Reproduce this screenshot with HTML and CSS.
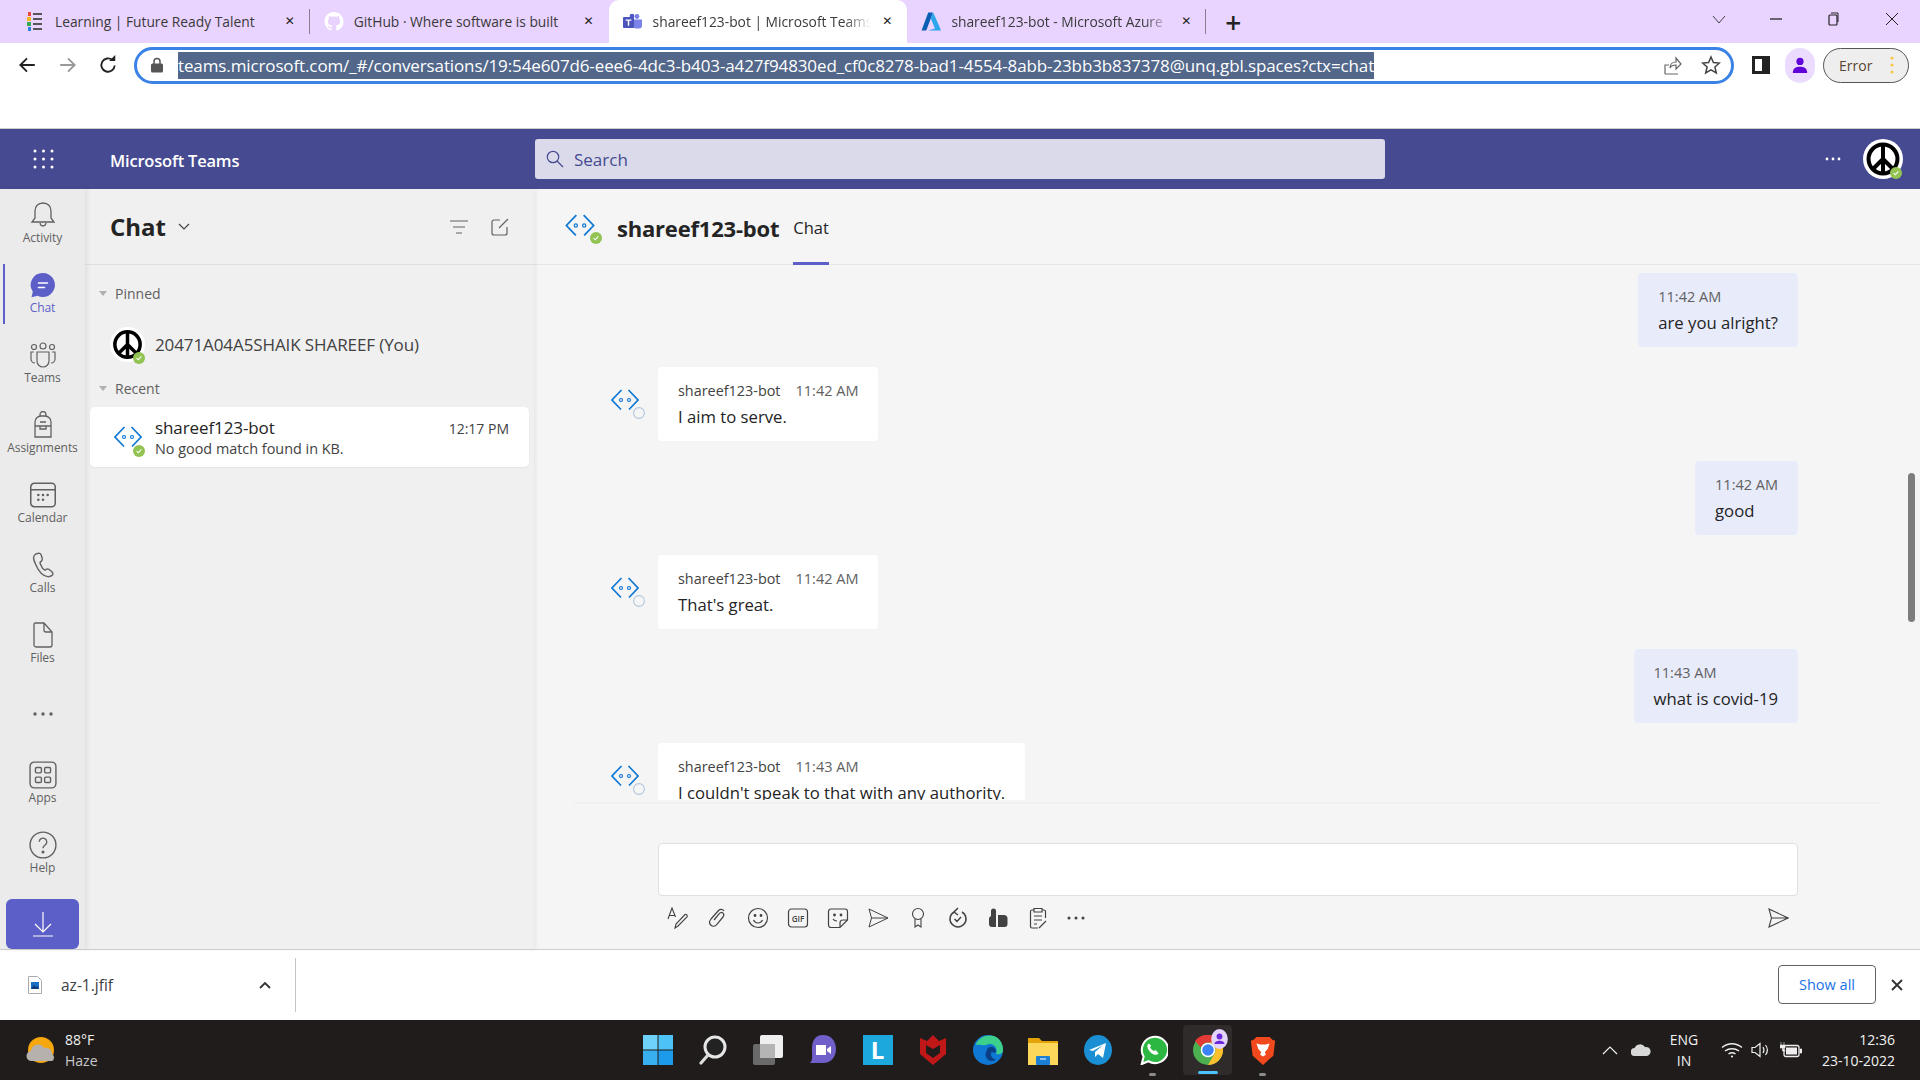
FILE: index.html
```html
<!DOCTYPE html>
<html lang="en">
<head>
    <meta charset="UTF-8">
    <title>shareef123-bot | Microsoft Teams</title>
    <link rel="stylesheet" href="styles.css">
</head>
<body>
    <svg class="defs" width="0" height="0">
        <symbol id="bot" viewBox="0 0 28 22">
            <path d="M10.500 1 1 11l9 9.500M17.500 1 27 11l-9 9.500" fill="none" stroke="#0f78d4" stroke-width="1.700"/>
            <circle cx="10" cy="11" r="1.500" fill="none" stroke="#0f78d4" stroke-width="1.200"/>
            <circle cx="18" cy="11" r="1.500" fill="none" stroke="#0f78d4" stroke-width="1.200"/>
        </symbol>
        <symbol id="peace" viewBox="0 0 36 36">
            <circle cx="18" cy="18" r="18" fill="#fff"/>
            <circle cx="18" cy="18" r="13" fill="none" stroke="#000" stroke-width="3.600"/>
            <path d="M18 5v26M18 18 9 27M18 18l9 9" stroke="#000" stroke-width="3.600" fill="none"/>
        </symbol>
        <symbol id="ok" viewBox="0 0 12 12">
            <circle cx="6" cy="6" r="6" fill="#92c353"/>
            <path d="m3.600 6.200 1.700 1.600 3-3.400" fill="none" stroke="#fff" stroke-width="1.100"/>
        </symbol>
        <symbol id="away" viewBox="0 0 12 12">
            <circle cx="6" cy="6" r="5.400" fill="#f5f5f5" stroke="#b4c6de" stroke-width="1.100"/>
        </symbol>
    </svg>

    <div class="tabstrip">
        <div class="tab tab-sep">
            <svg class="favicon" viewBox="0 0 20 19"><path d="M3 0h3v4H3z" fill="#e8483f"/><path d="M2 5h4v4H2z" fill="#f5b81c"/><path d="M2 10h4v4H2z" fill="#35a853"/><path d="M3 15h3v4H3z" fill="#2a7de1"/><path d="M8 1h9v2H8zM8 6h9v2H8zM8 11h9v2H8zM8 16h9v2H8z" fill="#555"/></svg>
            <span class="tab-title">Learning | Future Ready Talent</span>
            <span class="tab-x">&#10005;</span>
        </div>
        <div class="tab">
            <svg class="favicon" viewBox="0 0 16 16"><path fill="#fff" d="M8 0C3.580 0 0 3.580 0 8c0 3.540 2.290 6.530 5.470 7.590.4.070.55-.17.55-.38 0-.19-.01-.82-.01-1.490-2.010.37-2.530-.49-2.690-.94-.09-.23-.48-.94-.82-1.130-.28-.15-.68-.52-.01-.53.63-.01 1.080.58 1.230.82.72 1.210 1.870.87 2.330.66.07-.52.28-.87.51-1.070-1.780-.2-3.640-.89-3.640-3.950 0-.87.31-1.590.82-2.150-.08-.2-.36-1.020.08-2.120 0 0 .67-.21 2.200.82.64-.18 1.320-.27 2-.27.68 0 1.360.09 2 .27 1.530-1.040 2.200-.82 2.200-.82.44 1.100.16 1.920.08 2.120.51.56.82 1.270.82 2.150 0 3.070-1.870 3.750-3.650 3.950.29.25.54.73.54 1.480 0 1.070-.01 1.930-.01 2.200 0 .21.15.46.55.38A8.013 8.013 0 0016 8c0-4.420-3.580-8-8-8z"/></svg>
            <span class="tab-title">GitHub &middot; Where software is built</span>
            <span class="tab-x">&#10005;</span>
        </div>
        <div class="tab tab-active">
            <svg class="favicon" viewBox="0 0 20 16"><circle cx="14" cy="3" r="2.400" fill="#7b83eb"/><path d="M10 6h9v6a3 3 0 0 1-3 3h-3a3 3 0 0 1-3-3z" fill="#7b83eb"/><circle cx="9" cy="2.600" r="2.400" fill="#5059c9"/><rect y="3.500" width="11" height="11" rx="1" fill="#4b53bc"/><path d="M2.600 6h5.800v1.300H6.200v5H4.800v-5H2.600z" fill="#fff"/></svg>
            <span class="tab-title tab-fade">shareef123-bot | Microsoft Teams</span>
            <span class="tab-x">&#10005;</span>
        </div>
        <div class="tab tab-sep">
            <svg class="favicon" viewBox="0 0 18 16"><path d="M6.500 0h4.300L5 15.500a.7.7 0 0 1-.6.5H.5L6.500 0z" fill="#0a5fb4"/><path d="M11 0l6.800 15.400a.4.4 0 0 1-.4.600H6.500l6-1.800L8.800 5z" fill="#2ea6ee"/></svg>
            <span class="tab-title tab-fade">shareef123-bot - Microsoft Azure</span>
            <span class="tab-x">&#10005;</span>
        </div>
        <span class="tab-plus">+</span>
        <div class="win-controls">
            <svg viewBox="0 0 14 14"><path d="M1 4l6 7 6-7" fill="none" stroke="#444"/></svg>
            <svg viewBox="0 0 14 14"><path d="M1 7h12" stroke="#222" stroke-width="1.300"/></svg>
            <svg viewBox="0 0 14 14"><rect x="3" y="3" width="8" height="10" rx="1" fill="none" stroke="#222" stroke-width="1.200"/><path d="M5 1h7v9" fill="none" stroke="#222"/></svg>
            <svg class="win-close" viewBox="0 0 14 14"><path d="M1 1l12 12M13 1 1 13" stroke="#222"/></svg>
        </div>
    </div>

    <div class="toolbar">
        <svg class="nav-icon" viewBox="0 0 18 18"><path d="M16 9H3M9 3 3 9l6 6" fill="none" stroke="#222" stroke-width="1.700"/></svg>
        <svg class="nav-icon nav-forward" viewBox="0 0 18 18"><path d="M2 9h13M9 3l6 6-6 6" fill="none" stroke="#999" stroke-width="1.700"/></svg>
        <svg class="nav-icon nav-reload" viewBox="0 0 18 18"><path d="M15 9.500A6 6 0 1 1 13 4.600" fill="none" stroke="#222" stroke-width="1.700"/><path d="M10 5.500h5.500V0z" fill="#222"/></svg>
        <div class="omnibox">
            <svg class="lock" viewBox="0 0 12 16"><path d="M3 7V4.500a3 3 0 0 1 6 0V7" fill="none" stroke="#555" stroke-width="1.500"/><rect y="6.500" width="12" height="9" rx="1.500" fill="#555"/></svg>
            <span class="url">teams.microsoft.com/_#/conversations/19:54e607d6-eee6-4dc3-b403-a427f94830ed_cf0c8278-bad1-4554-8abb-23bb3b837378@unq.gbl.spaces?ctx=chat</span>
            <svg class="omni-icon omni-share" viewBox="0 0 20 20"><path d="M3 19h13M3 19v-9h4M8 13c0-4 3-6 6-6V3l5 6-5 5v-4c-3 0-5 1-6 3z" fill="none" stroke="#666" stroke-width="1.200"/></svg>
            <svg class="omni-icon" viewBox="0 0 20 20"><path d="m10 2 2.400 5.500 6 .5-4.500 4 1.400 6L10 14.800 4.700 18l1.400-6L1.600 8l6-.5z" fill="none" stroke="#444" stroke-width="1.500"/></svg>
        </div>
        <svg class="sidepanel" viewBox="0 0 18 18"><path d="M0 0h18v18H0z" fill="#222"/><path d="M3 3h7v12H3z" fill="#fff"/></svg>
        <div class="profile">
            <svg viewBox="0 0 20 20"><circle cx="10" cy="6" r="4" fill="#6200d9"/><path d="M2 19c0-5 3-7 8-7s8 2 8 7z" fill="#6200d9"/></svg>
        </div>
        <div class="error-pill">
            <span>Error</span>
            <svg viewBox="0 0 4 18"><circle cx="2" cy="2" r="1.600" fill="#f7c948"/><circle cx="2" cy="9" r="1.600" fill="#f7c948"/><circle cx="2" cy="16" r="1.600" fill="#f7c948"/></svg>
        </div>
    </div>
    <div class="bookmarks"></div>

    <header class="teams-bar">
        <svg class="waffle" viewBox="0 0 21 20" fill="#fff">
            <circle cx="2" cy="2" r="1.500"/><circle cx="10.500" cy="2" r="1.500"/><circle cx="19" cy="2" r="1.500"/>
            <circle cx="2" cy="10" r="1.500"/><circle cx="10.500" cy="10" r="1.500"/><circle cx="19" cy="10" r="1.500"/>
            <circle cx="2" cy="18" r="1.500"/><circle cx="10.500" cy="18" r="1.500"/><circle cx="19" cy="18" r="1.500"/>
        </svg>
        <span class="app-name">Microsoft Teams</span>
        <div class="search">
            <svg viewBox="0 0 18 18"><circle cx="7" cy="7" r="5.700" fill="none" stroke="#464a91" stroke-width="1.200"/><path d="m11 11 6 6" stroke="#464a91" stroke-width="1.200"/></svg>
            <span>Search</span>
        </div>
        <svg class="bar-more" viewBox="0 0 16 4" fill="#fff"><circle cx="2" cy="2" r="1.400"/><circle cx="8" cy="2" r="1.400"/><circle cx="14" cy="2" r="1.400"/></svg>
        <div class="avatar avatar-me">
            <svg class="avatar-img"><use href="#peace"/></svg>
            <svg class="status status-bar"><use href="#ok"/></svg>
        </div>
    </header>

    <div class="teams-body">
        <nav class="rail">
            <div class="rail-item">
                <svg viewBox="0 0 24 28"><path d="M12 2c-5 0-8 3.500-8 8v7l-3 4h22l-3-4v-7c0-4.500-3-8-8-8zM9 22c.3 2 1.500 3 3 3s2.700-1 3-3" fill="none" stroke="#616161" stroke-width="1.300"/></svg>
                <span>Activity</span>
            </div>
            <div class="rail-item rail-active">
                <svg viewBox="0 0 28 28"><path d="M14 2a12 12 0 1 1-5.500 22.700L2.500 26.300l1.300-5.500A12 12 0 0 1 14 2z" fill="#5b5fc7"/><path d="M9.500 12h9M9.500 16.500h6" stroke="#fff" stroke-width="1.600" stroke-linecap="round"/></svg>
                <span>Chat</span>
            </div>
            <div class="rail-item">
                <svg viewBox="0 0 28 28" fill="none" stroke="#616161" stroke-width="1.200"><circle cx="14" cy="5" r="3"/><circle cx="5" cy="6" r="2.500"/><circle cx="23" cy="6" r="2.500"/><path d="M8 11h12v9a6 6 0 0 1-12 0zM5 11H2v7a4 4 0 0 0 4 4M23 11h3v7a4 4 0 0 1-4 4"/></svg>
                <span>Teams</span>
            </div>
            <div class="rail-item">
                <svg viewBox="0 0 24 28" fill="none" stroke="#616161" stroke-width="1.300"><path d="M9 5V3.500a3 3 0 0 1 6 0V5M4 26V11a6 6 0 0 1 6-6h4a6 6 0 0 1 6 6v15zM4 15h16M9 11h6M9 15v3h6v-3"/></svg>
                <span>Assignments</span>
            </div>
            <div class="rail-item">
                <svg viewBox="0 0 24 24" fill="none" stroke="#616161" stroke-width="1.300"><rect x="1.500" y="2" width="21" height="20" rx="3"/><path d="M1.500 7.500h21"/><g fill="#616161" stroke="none"><circle cx="8" cy="12" r="1.100"/><circle cx="12" cy="12" r="1.100"/><circle cx="16" cy="12" r="1.100"/><circle cx="8" cy="16" r="1.100"/><circle cx="12" cy="16" r="1.100"/></g></svg>
                <span>Calendar</span>
            </div>
            <div class="rail-item">
                <svg viewBox="0 0 24 26"><path d="M8 2 5 3C2.500 4.500 3 8 5 12c2.500 6 7 11.500 12 12l3-1c1.500-1 1.500-2.500.5-3.500l-3-2.500c-1-.7-2-.5-3 .5-1 .5-2 0-3-1.500L9.500 12c-.5-1 0-2 1-2.500 1-1 1-2 .7-3l-1-3C9.800 2.500 9 2 8 2z" fill="none" stroke="#616161" stroke-width="1.300"/></svg>
                <span>Calls</span>
            </div>
            <div class="rail-item">
                <svg viewBox="0 0 22 28" fill="none" stroke="#616161" stroke-width="1.300"><path d="M3 2h9l8 9v13a2 2 0 0 1-2 2H4a2 2 0 0 1-2-2V3zM12 2v7a2 2 0 0 0 2 2h6"/></svg>
                <span>Files</span>
            </div>
            <div class="rail-item rail-dots">
                <svg viewBox="0 0 20 4" fill="#616161"><circle cx="2" cy="2" r="1.700"/><circle cx="10" cy="2" r="1.700"/><circle cx="18" cy="2" r="1.700"/></svg>
            </div>
            <div class="rail-item">
                <svg viewBox="0 0 26 26" fill="none" stroke="#616161" stroke-width="1.300"><rect x="1" y="1" width="24" height="24" rx="4"/><rect x="6" y="6" width="5.500" height="5" rx="1"/><rect x="14.500" y="6" width="5.500" height="5" rx="1"/><rect x="6" y="15" width="5.500" height="5" rx="1"/><rect x="14.500" y="15" width="5.500" height="5" rx="1"/></svg>
                <span>Apps</span>
            </div>
            <div class="rail-item">
                <svg viewBox="0 0 26 26" fill="none" stroke="#616161" stroke-width="1.300"><circle cx="13" cy="13" r="12"/><path d="M9.500 10a3.500 3.500 0 1 1 5.500 3c-1.500 1-2 1.500-2 3"/><circle cx="13" cy="19.500" r=".8" fill="#616161"/></svg>
                <span>Help</span>
            </div>
            <button class="rail-download">
                <svg viewBox="0 0 20 26"><path d="M10 1v20M2 13l8 8 8-8M0 25h20" fill="none" stroke="#fff" stroke-width="1.200"/></svg>
            </button>
        </nav>

        <aside class="list-panel">
            <div class="list-head">
                <h1>Chat</h1>
                <svg class="head-caret" viewBox="0 0 12 8"><path d="m1 1 5 5 5-5" fill="none" stroke="#424242" stroke-width="1.200"/></svg>
                <svg class="head-icon head-filter" viewBox="0 0 18 14"><path d="M0 1h18M3 7h12M6 13h6" stroke="#616161" stroke-width="1.200"/></svg>
                <svg class="head-icon" viewBox="0 0 18 18"><path d="M9 2H3a2 2 0 0 0-2 2v11a2 2 0 0 0 2 2h11a2 2 0 0 0 2-2V9M8 10l9-9" fill="none" stroke="#616161" stroke-width="1.200"/></svg>
            </div>
            <div class="section-label section-pinned"><i class="tri"></i>Pinned</div>
            <div class="chat-row chat-pinned">
                <div class="avatar avatar-list">
                    <svg class="avatar-img"><use href="#peace"/></svg>
                    <svg class="status status-list"><use href="#ok"/></svg>
                </div>
                <span class="chat-name">20471A04A5SHAIK SHAREEF (You)</span>
            </div>
            <div class="section-label"><i class="tri"></i>Recent</div>
            <div class="chat-row chat-card">
                <div class="avatar avatar-list">
                    <svg class="bot-img"><use href="#bot"/></svg>
                    <svg class="status status-list"><use href="#ok"/></svg>
                </div>
                <div class="chat-text">
                    <div class="chat-top">
                        <span class="chat-name">shareef123-bot</span>
                        <span class="chat-time">12:17 PM</span>
                    </div>
                    <div class="chat-preview">No good match found in KB.</div>
                </div>
            </div>
        </aside>

        <main class="conversation">
            <div class="conv-head">
                <div class="avatar avatar-conv">
                    <svg class="bot-img"><use href="#bot"/></svg>
                    <svg class="status status-conv"><use href="#ok"/></svg>
                </div>
                <h2>shareef123-bot</h2>
                <span class="conv-tab">Chat</span>
            </div>
            <div class="messages">
                <div class="msg msg-me"><div class="bubble"><div class="meta"><time>11:42 AM</time></div><div class="body">are you alright?</div></div></div>
                <div class="msg">
                    <div class="avatar avatar-msg"><svg class="bot-img"><use href="#bot"/></svg><svg class="status status-msg"><use href="#away"/></svg></div>
                    <div class="bubble"><div class="meta"><b>shareef123-bot</b><time>11:42 AM</time></div><div class="body">I aim to serve.</div></div>
                </div>
                <div class="msg msg-me"><div class="bubble"><div class="meta"><time>11:42 AM</time></div><div class="body">good</div></div></div>
                <div class="msg">
                    <div class="avatar avatar-msg"><svg class="bot-img"><use href="#bot"/></svg><svg class="status status-msg"><use href="#away"/></svg></div>
                    <div class="bubble"><div class="meta"><b>shareef123-bot</b><time>11:42 AM</time></div><div class="body">That's great.</div></div>
                </div>
                <div class="msg msg-me"><div class="bubble"><div class="meta"><time>11:43 AM</time></div><div class="body">what is covid-19</div></div></div>
                <div class="msg">
                    <div class="avatar avatar-msg"><svg class="bot-img"><use href="#bot"/></svg><svg class="status status-msg"><use href="#away"/></svg></div>
                    <div class="bubble"><div class="meta"><b>shareef123-bot</b><time>11:43 AM</time></div><div class="body">I couldn't speak to that with any authority.</div></div>
                </div>
            </div>
            <div class="scrollthumb"></div>
            <div class="composer">
                <div class="compose-box"></div>
                <div class="compose-tools">
                    <svg viewBox="0 0 22 22" fill="none" stroke="#424242" stroke-width="1.100"><path d="M1 12 5 1l3.500 9M2.300 8.500h5M8 21l1-4L18 7.500c1-1 3 1 2 2.500l-9 9z"/></svg>
                    <svg viewBox="0 0 22 22" fill="none" stroke="#424242" stroke-width="1.200"><path d="M17 4c-1.500-2-4-2-5.500-.5L4 12c-2 2.500-1.500 5 0 6.300s4 1.200 5.500-.5L16 10c1-1.300 1-2.800 0-3.800s-2.500-1-3.500.2L7 13"/></svg>
                    <svg viewBox="0 0 22 22" fill="none" stroke="#424242" stroke-width="1.200"><circle cx="11" cy="11" r="9.500"/><path d="M6.500 13c1 2 2.500 3 4.500 3s3.500-1 4.500-3"/><circle cx="8" cy="8.500" r=".8" fill="#424242"/><circle cx="14" cy="8.500" r=".8" fill="#424242"/></svg>
                    <svg viewBox="0 0 22 22" fill="none" stroke="#424242" stroke-width="1.200"><rect x="1.500" y="2" width="19" height="18" rx="3"/><text x="11" y="14.500" text-anchor="middle" class="gif-label">GIF</text></svg>
                    <svg viewBox="0 0 22 22" fill="none" stroke="#424242" stroke-width="1.200"><path d="M4 2h14a2.500 2.500 0 0 1 2.500 2.500V13L13 20.500H4A2.500 2.500 0 0 1 1.500 18V4.500A2.500 2.500 0 0 1 4 2zM13 20.500V16a3 3 0 0 1 3-3h4.500M6 12c1 1.500 2.500 2 4 2"/><circle cx="7.500" cy="8" r=".8" fill="#424242"/><circle cx="14" cy="8" r=".8" fill="#424242"/></svg>
                    <svg viewBox="0 0 22 22" fill="none" stroke="#424242" stroke-width="1"><path d="M2 2l19 9-19 9 2.500-9zM4.500 11H21"/></svg>
                    <svg viewBox="0 0 22 22" fill="none" stroke="#424242" stroke-width="1.100"><circle cx="11" cy="7" r="5.500"/><path d="M8 12v8l3-2 3 2v-8"/></svg>
                    <svg viewBox="0 0 22 22" fill="none" stroke="#424242" stroke-width="1.500"><path d="M7 5a8 8 0 1 0 8 0M11 1l-4 4 4 3M7.500 12l2.500 2.500 4-4.500"/></svg>
                    <svg viewBox="0 0 22 22" fill="#424242"><path d="M4 4a2.500 2.500 0 0 1 5 0v16H5a3 3 0 0 1-3-3v-5c0-2 1-2.500 2-3zM11 8h6a3.500 3.500 0 0 1 3.500 3.500V17a3 3 0 0 1-3 3H11z"/></svg>
                    <svg viewBox="0 0 22 22" fill="none" stroke="#424242" stroke-width="1.200"><path d="M7 3H5a1.500 1.500 0 0 0-1.500 1.500v15A1.500 1.500 0 0 0 5 21h6M15 3h2a1.500 1.500 0 0 1 1.500 1.500V11M7 1.500h8v3.500H7zM7 9h8M7 13h8M7 17h3M12 21l7-7" /></svg>
                    <svg class="tool-dots" viewBox="0 0 18 4" fill="#424242"><circle cx="2" cy="2" r="1.500"/><circle cx="9" cy="2" r="1.500"/><circle cx="16" cy="2" r="1.500"/></svg>
                    <svg class="tool-send" viewBox="0 0 22 22" fill="none" stroke="#424242" stroke-width="1.100"><path d="M2 2l19 9-19 9 2.500-9zM4.500 11H21"/></svg>
                </div>
            </div>
        </main>
    </div>

    <div class="shelf">
        <div class="shelf-item">
            <svg class="shelf-file" viewBox="0 0 14 18"><path d="M.5.5h9l4 4v13H.5z" fill="#fff" stroke="#aaa"/><rect x="3" y="6" width="8" height="7" fill="#1a6fc4"/><path d="M3 13l3-4 2 2 1-1 2 3z" fill="#0b3e78"/></svg>
            <span class="shelf-name">az-1.jfif</span>
            <svg class="shelf-caret" viewBox="0 0 12 8"><path d="M1 7l5-5 5 5" fill="none" stroke="#333" stroke-width="1.800"/></svg>
        </div>
        <button class="show-all">Show all</button>
        <svg class="shelf-close" viewBox="0 0 12 12"><path d="M1 1l10 10M11 1 1 11" stroke="#333" stroke-width="1.900"/></svg>
    </div>

    <footer class="taskbar">
        <div class="weather">
            <svg viewBox="0 0 30 26"><circle cx="15" cy="13" r="13" fill="#f5a70d"/><path d="M6 24a5 5 0 0 1-1-10 7 7 0 0 1 13-3 6 6 0 0 1 8 6 4 4 0 0 1 0 7z" fill="#b6b1ad"/></svg>
            <div class="weather-text"><div>88&deg;F</div><div class="weather-sub">Haze</div></div>
        </div>
        <div class="task-icons">
            <span class="task-slot"><svg viewBox="0 0 30 30"><path d="M0 0h14.500v14.500H0z" fill="#6fd2fa"/><path d="M15.500 0H30v14.500H15.500z" fill="#4cc2f7"/><path d="M0 15.500h14.500V30H0z" fill="#38b0f0"/><path d="M15.500 15.500H30V30H15.500z" fill="#1c9bec"/></svg></span>
            <span class="task-slot"><svg viewBox="0 0 30 30"><circle cx="17" cy="12" r="10" fill="#222" stroke="#e6e6e6" stroke-width="3"/><path d="M10 20 3 28" stroke="#ddd" stroke-width="3.200" stroke-linecap="round"/></svg></span>
            <span class="task-slot"><svg viewBox="0 0 30 30"><rect y="9" width="22" height="21" rx="2" fill="#6a6a6a"/><rect x="7" y="0" width="23" height="23" rx="2" fill="#efefef"/><rect x="7" y="9" width="15" height="14" fill="#b5b5b5"/></svg></span>
            <span class="task-slot"><svg viewBox="0 0 30 30"><path d="M15 0c8 0 13 6 13 14s-5 14-13 14H2c3-3 2-6 2-14S7 0 15 0z" fill="#7160c9"/><path d="M8 10h10v10H8zM19 14l4-3v8l-4-3z" fill="#fff"/></svg></span>
            <span class="task-slot"><span class="task-l">L</span></span>
            <span class="task-slot"><svg viewBox="0 0 30 30"><path d="M2 3l7 3 6-6 6 6 7-3v16L15 30 2 19z" fill="#c01818"/><path d="M8 10l7 4 7-4v8l-7 5-7-5z" fill="#201c1b"/></svg></span>
            <span class="task-slot"><svg viewBox="0 0 30 30"><circle cx="15" cy="15" r="15" fill="#0f78d4"/><path d="M3 9C6 2 14-1 21 1c6 2 9 8 9 14 0 4-4 5-7 4 3-8-5-12-10-9-3 1-6-1-10 0z" fill="#3dd08c"/><path d="M14 15c0-4 8-5 9 1 0 2-2 2-4 1-2 0-2 6 4 8-8 4-13-4-9-10z" fill="#0b3f85"/></svg></span>
            <span class="task-slot"><svg viewBox="0 0 30 30"><path d="M0 3h11l3 3h16v24H0z" fill="#e4a409"/><path d="M0 8h30v22H0z" fill="#fdd75a"/><rect x="8" y="21" width="14" height="9" rx="1" fill="#1b7fd4"/><path d="M12 24h6" stroke="#fff"/></svg></span>
            <span class="task-slot"><svg viewBox="0 0 30 30"><ellipse cx="15" cy="15" rx="14" ry="15" fill="#1a8fd3"/><path d="M6 15 23 8l-3 15-5-4-3 3v-5l8-7-10 6z" fill="#fff"/></svg></span>
            <span class="task-slot task-run"><svg viewBox="0 0 30 32"><path d="M3 31l2-8a14 14 0 1 1 5 5z" fill="#2bb741" stroke="#fff" stroke-width="2.200"/><path d="M10 9c-2 3-1 6 2 9s6 4 9 2l-3-4-2 1c-2-1-3-2-4-4l1-2z" fill="#fff"/></svg></span>
            <span class="task-slot task-active">
                <svg class="chrome-icon" viewBox="0 0 30 30"><circle cx="15" cy="15" r="15" fill="#4caf50"/><path d="M15 0a15 15 0 0 1 13 7.500H15a7.500 7.500 0 0 0-7 5L2 6a15 15 0 0 1 13-6z" fill="#e53935"/><path d="M28 7.500A15 15 0 0 1 15 30l6.500-11.300A7.500 7.500 0 0 0 15 7.500z" fill="#fbc02d"/><circle cx="15" cy="15" r="6.500" fill="#3b82f6" stroke="#fff" stroke-width="1.500"/></svg>
                <svg class="chrome-badge" viewBox="0 0 20 24"><ellipse cx="10" cy="12" rx="10" ry="12" fill="#e4d4fa"/><circle cx="10" cy="9" r="3.500" fill="#6d28d9"/><path d="M4 18c0-3 3-4 6-4s6 1 6 4z" fill="#6d28d9"/></svg>
            </span>
            <span class="task-slot task-run"><svg viewBox="0 0 26 32"><path d="M6 2h14l3 3 3 1-2 16-11 10L2 22 0 6l3-1z" fill="#f1491d"/><path d="M6 9l4 1h6l4-1-2 6-3 3 1 3-3 2-3-2 1-3-3-3z" fill="#fff"/></svg></span>
        </div>
        <div class="tray">
            <svg class="tray-caret" viewBox="0 0 16 9"><path d="M1 8l7-7 7 7" fill="none" stroke="#eee" stroke-width="1.200"/></svg>
            <svg class="tray-cloud" viewBox="0 0 20 12"><path d="M4 12a4 4 0 0 1-.5-8A6 6 0 0 1 14 3a4.500 4.500 0 0 1 2 9z" fill="#d8d8d8"/></svg>
            <div class="tray-lang"><div>ENG</div><div>IN</div></div>
            <svg class="tray-wifi" viewBox="0 0 22 16" fill="none" stroke="#eee" stroke-width="1.400"><path d="M1 5.500c6-5 14-5 20 0M4 9c4-3 10-3 14 0M7.500 12c2-1.500 5-1.500 7 0"/><circle cx="11" cy="14.500" r="1.100" fill="#eee" stroke="none"/></svg>
            <svg class="tray-sound" viewBox="0 0 20 16" fill="none" stroke="#eee" stroke-width="1.200"><path d="M1 5.500h3L9 1.500v13l-5-4H1zM12 5c1.300 2 1.300 4 0 6M14.500 3c2.300 3 2.300 7 0 10"/></svg>
            <svg class="tray-batt" viewBox="0 0 22 16"><rect x="4" y="3.500" width="15" height="11" rx="2" fill="none" stroke="#eee" stroke-width="1.300"/><rect x="6" y="5.500" width="11" height="7" fill="#eee"/><path d="M20 7h2v4h-2zM1 0v3M4 0v3M0 3h5v3H0zM2.500 6v3h3" fill="#eee" stroke="#eee" stroke-width=".6"/></svg>
            <div class="tray-clock"><div>12:36</div><div>23-10-2022</div></div>
        </div>
    </footer>
</body>
</html>
```

FILE: styles.css
```css
* {
    box-sizing: border-box;
}
html, body {
    margin: 0;
    height: 100%;
}
body {
    width: 1920px;
    height: 1080px;
    overflow: hidden;
    display: flex;
    flex-direction: column;
    font-family: "Open Sans", "Noto Sans", sans-serif;
    color: #242424;
    background: #fff;
}
svg {
    display: block;
    flex: none;
}
.defs {
    position: absolute;
}

/* browser tabs */
.tabstrip {
    height: 43px;
    flex: none;
    display: flex;
    align-items: stretch;
    padding-left: 11px;
    background: #e9d3ff;
}
.tab {
    width: 298.800px;
    display: flex;
    align-items: center;
    gap: 10px;
    padding: 0 14px 1px 14px;
    font-size: 13.800px;
    color: #3a3a3a;
    position: relative;
}
.tab-sep::after {
    content: "";
    position: absolute;
    right: 0;
    top: 9px;
    bottom: 9px;
    width: 1px;
    background: #8a7f94;
}
.tab-active {
    background: #fff;
    border-radius: 10px 10px 0 0;
}
.favicon {
    width: 20px;
    height: 19px;
}
.tab-title {
    flex: 1;
    white-space: nowrap;
    overflow: hidden;
}
.tab-fade {
    -webkit-mask-image: linear-gradient(to right, #000 88%, transparent 100%);
    mask-image: linear-gradient(to right, #000 88%, transparent 100%);
}
.tab-x {
    width: 12px;
    font-size: 12px;
    font-weight: 700;
    font-family: "DejaVu Sans", sans-serif;
    color: #222;
    text-align: center;
}
.tab-plus {
    align-self: center;
    margin-left: 19px;
    font-size: 28px;
    font-weight: 600;
    line-height: 26px;
    color: #222;
}
.win-controls {
    margin-left: auto;
    display: flex;
    align-items: center;
    gap: 43px;
    padding: 0 21px 6px 0;
}
.win-controls svg {
    width: 14px;
    height: 14px;
}
.win-controls .win-close {
    margin-left: 2px;
}

/* address bar */
.toolbar {
    height: 44px;
    flex: none;
    display: flex;
    align-items: center;
    padding-left: 17px;
    background: #fff;
}
.nav-icon {
    width: 20px;
    height: 20px;
    margin-right: 22px;
}
.nav-forward {
    margin-left: -1px;
}
.nav-reload {
    margin-right: 17px;
    margin-left: -2px;
}
.omnibox {
    width: 1600px;
    height: 37px;
    display: flex;
    align-items: center;
    padding: 0 10px 0 14px;
    border: 3px solid #3b82e6;
    border-radius: 19px;
    margin-left: -1px;
}
.lock {
    width: 12px;
    height: 16px;
    margin-right: 15px;
}
.url {
    height: 27px;
    line-height: 27px;
    background: #52678a;
    color: #fff;
    font-size: 17px;
    letter-spacing: -.12px;
    white-space: nowrap;
}
.omni-icon {
    width: 20px;
    height: 20px;
}
.omni-share {
    margin-left: auto;
    margin-right: 19px;
}
.sidepanel {
    width: 18px;
    height: 18px;
    margin-left: 18px;
}
.profile {
    width: 30px;
    height: 35px;
    margin-left: 15px;
    border-radius: 15px;
    background: #ebdcff;
    display: flex;
    align-items: center;
    justify-content: center;
}
.profile svg {
    width: 18px;
    height: 20px;
}
.error-pill {
    width: 86px;
    height: 35px;
    margin-left: 8px;
    display: flex;
    align-items: center;
    justify-content: space-between;
    padding: 0 14px 0 15px;
    border: 1px solid #555;
    border-radius: 18px;
    background: #eee;
    font-size: 14px;
    color: #5a4630;
}
.error-pill svg {
    width: 4px;
    height: 18px;
}
.bookmarks {
    height: 42px;
    flex: none;
    background: #fff;
    border-bottom: 1px solid #ccc;
}

/* teams top bar */
.teams-bar {
    height: 60px;
    flex: none;
    display: flex;
    align-items: center;
    background: #464a91;
}
.waffle {
    width: 21px;
    height: 20px;
    margin: 0 56px 0 33px;
}
.app-name {
    width: 425px;
    padding-top: 2px;
    color: #fff;
    font-size: 16.500px;
    font-weight: 600;
    letter-spacing: -.2px;
}
.search {
    width: 850px;
    height: 40px;
    display: flex;
    align-items: center;
    gap: 10px;
    padding-left: 11px;
    border-radius: 3px;
    background: #dadaea;
    color: #464a91;
    font-size: 17px;
}
.search svg {
    width: 18px;
    height: 18px;
}
.bar-more {
    width: 16px;
    height: 4px;
    margin-left: 440px;
}
.avatar {
    position: relative;
    flex: none;
}
.avatar-me {
    width: 40px;
    height: 40px;
    margin-left: 22px;
}
.avatar-img {
    width: 100%;
    height: 100%;
}
.status {
    position: absolute;
    width: 12px;
    height: 12px;
}
.status-bar {
    right: 1px;
    bottom: 0;
}

.teams-body {
    height: 760px;
    flex: none;
    display: flex;
    background: #f5f5f5;
}

/* left rail */
.rail {
    width: 85px;
    flex: none;
    display: flex;
    flex-direction: column;
    gap: 10px;
    padding-top: 5px;
    background: #ebebeb;
    box-shadow: 2px 0 5px rgba(0, 0, 0, .08);
    z-index: 2;
}
.rail-item {
    height: 60px;
    flex: none;
    display: flex;
    flex-direction: column;
    align-items: center;
    padding-top: 7px;
    position: relative;
    font-size: 12px;
    line-height: 16px;
    letter-spacing: -.05px;
    color: #616161;
}
.rail-item svg {
    height: 28px;
    width: 28px;
    margin-bottom: 1px;
}
.rail-active {
    color: #5b5fc7;
}
.rail-active::before {
    content: "";
    position: absolute;
    left: 3px;
    top: 0;
    bottom: 0;
    width: 2px;
    background: #5b5fc7;
}
.rail-dots {
    justify-content: center;
    padding-top: 0;
}
.rail-dots svg {
    height: 4px;
    width: 20px;
    margin: 0;
}
.rail-download {
    width: 73px;
    height: 50px;
    flex: none;
    margin: 5px 0 0 6px;
    padding: 0;
    border: 0;
    border-radius: 6px;
    background: #5b5fc7;
    display: flex;
    align-items: center;
    justify-content: center;
}
.rail-download svg {
    width: 20px;
    height: 26px;
}

/* chat list */
.list-panel {
    width: 449px;
    flex: none;
    background: #f0f0f0;
    box-shadow: 2px 0 4px rgba(0, 0, 0, .06);
    z-index: 1;
}
.list-head {
    height: 76px;
    display: flex;
    align-items: center;
    padding: 0 25px 0 25px;
    border-bottom: 1px solid #e0e0e0;
}
.list-head h1 {
    margin: 0;
    font-size: 24px;
    font-weight: 700;
}
.head-caret {
    width: 12px;
    height: 8px;
    margin-left: 12px;
}
.head-icon {
    width: 18px;
    height: 18px;
}
.head-filter {
    margin-left: auto;
    margin-right: 23px;
}
.section-label {
    display: flex;
    align-items: center;
    height: 20px;
    padding-left: 14px;
    font-size: 14px;
    color: #616161;
}
.section-pinned {
    margin-top: 18px;
}
.tri {
    width: 0;
    height: 0;
    margin-right: 8px;
    border-left: 4px solid transparent;
    border-right: 4px solid transparent;
    border-top: 5px solid #b0b0b0;
}
.chat-row {
    display: flex;
    align-items: center;
    margin: 0 5px;
    padding-left: 20px;
}
.chat-pinned {
    height: 64px;
    margin-top: 9px;
    margin-bottom: 2px;
}
.avatar-list {
    width: 35px;
    height: 35px;
    display: flex;
    align-items: center;
    justify-content: center;
    margin-right: 10px;
}
.status-list {
    right: 0;
    bottom: -2px;
}
.bot-img {
    width: 28px;
    height: 22px;
}
.chat-name {
    font-size: 17px;
    color: #424242;
    letter-spacing: -.1px;
}
.chat-card {
    height: 60px;
    margin-top: 9px;
    background: #fff;
    border-radius: 5px;
    box-shadow: 0 1px 2px rgba(0, 0, 0, .05);
}
.chat-text {
    flex: 1;
    padding: 2px 20px 0 0;
}
.chat-top {
    display: flex;
    justify-content: space-between;
    align-items: baseline;
    line-height: 20px;
}
.chat-card .chat-name {
    color: #242424;
}
.chat-time {
    font-size: 14px;
    color: #424242;
}
.chat-preview {
    font-size: 14.400px;
    line-height: 19px;
    color: #424242;
}

/* conversation */
.conversation {
    flex: 1;
    min-width: 0;
    display: flex;
    flex-direction: column;
    position: relative;
}
.conv-head {
    height: 76px;
    flex: none;
    display: flex;
    align-items: center;
    padding: 2px 0 0 31px;
    border-bottom: 1px solid #e6e6e6;
}
.avatar-conv {
    width: 30px;
    height: 23px;
    margin-top: -4px;
    margin-right: 22px;
}
.avatar-conv .bot-img {
    width: 30px;
    height: 23px;
}
.status-conv {
    right: -7px;
    bottom: -7px;
}
.conv-head h2 {
    margin: 0;
    font-size: 22px;
    font-weight: 700;
    letter-spacing: -.2px;
}
.conv-tab {
    align-self: stretch;
    display: flex;
    align-items: center;
    margin: 0 0 -1px 14px;
    padding-top: 2px;
    font-size: 16.500px;
    border-bottom: 3px solid #5b5fc7;
}
.messages {
    height: 535px;
    flex: none;
    overflow: hidden;
    display: flex;
    flex-direction: column;
    gap: 20px;
    padding: 8px 122px 0 76px;
}
.msg {
    display: flex;
    flex: none;
}
.msg-me {
    justify-content: flex-end;
}
.avatar-msg {
    width: 48px;
    padding: 22px 0 0 1px;
}
.status-msg {
    left: 23px;
    top: 40px;
}
.bubble {
    min-height: 74px;
    padding: 14px 20px 0;
    border-radius: 4px;
    background: #fff;
}
.msg-me .bubble {
    background: #e8ebfa;
}
.meta {
    display: flex;
    gap: 15px;
    line-height: 20px;
    font-size: 14.500px;
}
.meta b {
    font-size: 14.400px;
    font-weight: 500;
    color: #424242;
}
.meta time {
    color: #616161;
}
.body {
    margin-top: 5px;
    font-size: 16.700px;
    line-height: 22px;
    white-space: nowrap;
}
.scrollthumb {
    position: absolute;
    right: 5px;
    top: 284px;
    width: 7px;
    height: 149px;
    border-radius: 4px;
    background: #7d7d7d;
}
.composer {
    margin: 2px 40px 0 40px;
    border-top: 2px solid #f0f0f0;
    padding: 39px 82px 0 84px;
}
.compose-box {
    height: 53px;
    border: 1px solid #e0e0e0;
    border-radius: 4px;
    background: #fff;
}
.compose-tools {
    display: flex;
    align-items: center;
    gap: 18px;
    margin-top: 11px;
    padding-left: 9px;
}
.compose-tools svg {
    width: 22px;
    height: 22px;
}
.compose-tools .tool-dots {
    width: 18px;
    height: 4px;
}
.compose-tools .tool-send {
    margin-left: auto;
    margin-right: 9px;
}
.gif-label {
    fill: #424242;
    stroke: none;
    font-size: 8px;
    font-weight: 600;
    font-family: "Open Sans", sans-serif;
}

/* downloads shelf */
.shelf {
    height: 71px;
    flex: none;
    display: flex;
    align-items: center;
    padding-right: 17px;
    background: #fff;
    border-top: 1px solid #d0d0d0;
}
.shelf-item {
    width: 296px;
    height: 54px;
    display: flex;
    align-items: center;
    padding: 0 24px 0 28px;
    border-right: 1px solid #c4c4c4;
}
.shelf-file {
    width: 14px;
    height: 18px;
}
.shelf-name {
    margin-left: 19px;
    font-size: 15.500px;
    color: #3c4043;
}
.shelf-caret {
    width: 12px;
    height: 8px;
    margin-left: auto;
}
.show-all {
    width: 98px;
    height: 39px;
    margin: -2px 0 0 auto;
    border: 1px solid #5f6368;
    border-radius: 4px;
    background: #fff;
    color: #1a73e8;
    font-family: inherit;
    font-size: 14.500px;
}
.shelf-close {
    width: 12px;
    height: 12px;
    margin-left: 15px;
}

/* windows taskbar */
.taskbar {
    height: 60px;
    flex: none;
    display: grid;
    grid-template-columns: 1fr auto 1fr;
    align-items: center;
    background: #201c1b;
    color: #f2f2f2;
    font-size: 14px;
    line-height: 21px;
}
.weather {
    display: flex;
    align-items: center;
    gap: 9px;
    padding-left: 26px;
}
.weather svg {
    width: 30px;
    height: 26px;
}
.weather-sub {
    color: #c8c8c8;
}
.task-icons {
    display: flex;
}
.task-slot {
    width: 55px;
    height: 50px;
    display: flex;
    align-items: center;
    justify-content: center;
    position: relative;
}
.task-slot > svg {
    width: 30px;
    height: 30px;
}
.task-run::after,
.task-active::after {
    content: "";
    position: absolute;
    left: 24px;
    bottom: -1px;
    width: 7px;
    height: 3px;
    border-radius: 2px;
    background: #8c8c8c;
}
.task-active {
    width: 49px;
    margin: 0 3px;
    border-radius: 4px;
    background: #2e2b2a;
}
.task-active::after {
    left: 15px;
    bottom: 1px;
    width: 20px;
    background: #4cc2ff;
}
.task-slot > .chrome-badge {
    position: absolute;
    right: 3px;
    top: 4px;
    width: 19px;
    height: 20px;
}
.task-l {
    width: 30px;
    height: 30px;
    background: #1ca8dc;
    color: #fff;
    font-weight: 700;
    font-size: 24px;
    line-height: 30px;
    text-align: center;
}
.tray {
    display: flex;
    align-items: center;
    justify-content: flex-end;
    padding-right: 25px;
}
.tray-caret {
    width: 16px;
    height: 9px;
}
.tray-cloud {
    width: 20px;
    height: 12px;
    margin-left: 13px;
}
.tray-lang {
    width: 36px;
    margin-left: 15px;
    text-align: center;
}
.tray-wifi {
    width: 22px;
    height: 16px;
    margin-left: 19px;
}
.tray-sound {
    width: 20px;
    height: 16px;
    margin-left: 8px;
}
.tray-batt {
    width: 22px;
    height: 16px;
    margin-left: 9px;
}
.tray-clock {
    width: 74px;
    margin-left: 19px;
    text-align: right;
    white-space: nowrap;
}
```
